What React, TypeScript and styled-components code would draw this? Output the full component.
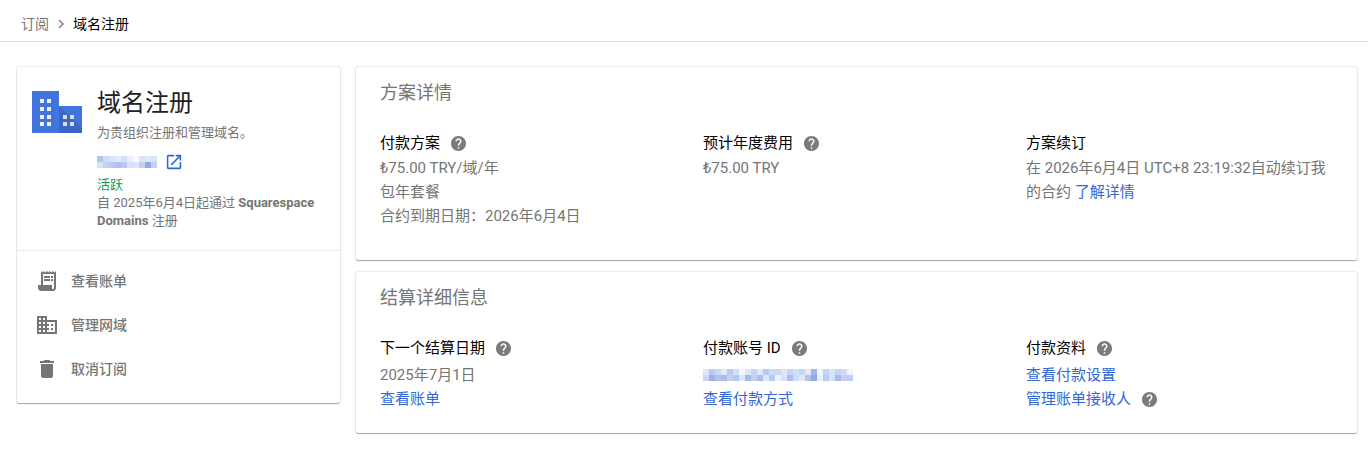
import React from "react";
import styled, { createGlobalStyle } from "styled-components";

const GlobalStyle = createGlobalStyle`
  * { box-sizing: border-box; }
  body {
    margin: 0;
    background: #fff;
    color: #757575;
    font-family: Roboto, "Noto Sans CJK SC", sans-serif;
    font-size: 15px;
    line-height: 24px;
  }
  h1, h2, h3, p, ul, ol { margin: 0; padding: 0; }
  ul, ol { list-style: none; }
  svg { display: block; flex: none; }
`;

const Link = styled.a<{ $muted?: boolean }>`
  color: ${(p) => (p.$muted ? "#757575" : "#3367d6")};
  text-decoration: none;
`;

const Breadcrumbs = styled.nav`
  border-bottom: 1px solid #e0e0e0;
  padding: 12px 21px 5px;
  font-size: 14px;

  ol { display: flex; align-items: center; gap: 8px; }
  li { display: flex; align-items: center; gap: 8px; }
`;

const Current = styled.span`
  color: #000;
`;

const Page = styled.main`
  display: flex;
  align-items: flex-start;
  gap: 16px;
  padding: 25px 11px 16px 17px;
`;

const Card = styled.section`
  background: #fff;
  border-radius: 2px;
  box-shadow: 0 1px 1px rgba(0, 0, 0, 0.3), 0 0 2px rgba(0, 0, 0, 0.26);
`;

const SideCard = styled(Card)`
  flex: 0 0 323px;
`;

const Details = styled.div`
  flex: 1;
  min-width: 0;
  display: flex;
  flex-direction: column;
  gap: 12px;
`;

const Product = styled.div`
  display: flex;
  gap: 15px;
  padding: 20px 15px;
  border-bottom: 1px solid #ebebeb;

  > svg { margin-top: 4px; }
`;

const ProductText = styled.div`
  font-size: 13px;
  line-height: 18px;
`;

const Title = styled.h1`
  color: #212121;
  font-size: 24px;
  font-weight: 400;
  line-height: 32px;
`;

const Description = styled.p`
  margin-top: 5px;
`;

const DomainLink = styled(Link)`
  display: flex;
  align-items: center;
  gap: 9px;
  height: 24px;
  margin: 8px 0 2px;
`;

const Status = styled.p`
  color: #0f9d58;
`;

const Menu = styled.ul`
  padding: 8px 0 12px;
`;

const MenuButton = styled.button`
  display: flex;
  align-items: center;
  gap: 12px;
  width: 100%;
  height: 44px;
  padding: 0 18px;
  border: 0;
  background: none;
  color: #757575;
  font: inherit;
  font-size: 14px;
  font-weight: 500;
  cursor: pointer;
`;

const DetailCard = styled(Card)<{ $compact?: boolean }>`
  padding: 14px 8px ${(p) => (p.$compact ? "22px" : "32px")} 24px;
`;

const CardTitle = styled.h2`
  font-size: 18px;
  font-weight: 400;
  line-height: 24px;
`;

const Columns = styled.div`
  display: grid;
  grid-template-columns: repeat(3, 1fr);
  margin-top: 26px;
`;

const Column = styled.div<{ $spaced?: boolean }>`
  padding-right: 16px;

  h3 + * { margin-top: ${(p) => (p.$spaced ? "3px" : "1px")}; }
`;

const Label = styled.h3`
  display: flex;
  align-items: center;
  gap: 11px;
  color: #000;
  font-size: 15px;
  font-weight: 400;
`;

const Line = styled.p`
  display: flex;
  align-items: center;
  gap: 11px;
  min-height: 24px;
`;

const HelpButton = styled.button`
  padding: 0;
  border: 0;
  background: none;
  color: #7b7b7b;
  cursor: pointer;
`;

function Help({ label }: { label: string }) {
  return (
    <HelpButton type="button" aria-label={label}>
      <svg width="15" height="15" viewBox="2 2 20 20" fill="currentColor">
        <path d="M12 2C6.48 2 2 6.48 2 12s4.48 10 10 10 10-4.48 10-10S17.52 2 12 2zm1 17h-2v-2h2v2zm2.07-7.75l-.9.92C13.45 12.9 13 13.5 13 15h-2v-.5c0-1.1.45-2.1 1.17-2.83l1.24-1.26c.37-.36.59-.86.59-1.41 0-1.1-.9-2-2-2s-2 .9-2 2H8c0-2.21 1.79-4 4-4s4 1.79 4 4c0 .88-.36 1.68-.93 2.25z" />
      </svg>
    </HelpButton>
  );
}

/* Hides a private value behind a grid of tinted cells, one colour per cell. */
function Mosaic({ rows, cell, label }: { rows: string[][]; cell: number; label: string }) {
  const width = rows[0].length * cell;
  const height = rows.length * cell;
  return (
    <svg width={width} height={height} role="img" aria-label={label} shapeRendering="crispEdges">
      {rows.map((row, y) =>
        row.map((fill, x) => (
          <rect key={`${x}-${y}`} x={x * cell} y={y * cell} width={cell} height={cell} fill={fill} />
        ))
      )}
    </svg>
  );
}

const domainCells = [
  ["#b3c6f0", "#d0dbf6", "#dbe4f8", "#e4eafa", "#d5dff7", "#e8eefb", "#f8faff", "#dbe4f8", "#e0e8f9", "#d9e2f8"],
  ["#d9e2f8", "#c3d1f3", "#b9c9f1", "#b0c3ef", "#b9caf1", "#d9e2f8", "#dce5f9", "#c0cff3", "#8faae8", "#c3d1f3"],
];

const accountCells = [
  "#dfe6f8 #b9c8ef #c9d6f5 #e3e9f9 #b9caf0 #d5def6 #f3f6fd #dce8fa #c6d4f4 #e3e6f8 #b9caf2 #cfdcf6 #c9d9f5 #dde5f8 #c6d3f3 #d2dff6 #c3d6f6 #e9e4f5 #9fb5ea #f3f6fd #c6d3f3 #d5e3f8 #c6d3f3 #d9d6f0 #eff4fd".split(" "),
  "#c9d6f5 #9db3e9 #b1c2ee #aabded #c3d0f2 #b5c6ef #dfe6f8 #a5b9eb #c4cff1 #aabeed #dbe8fa #b5cbf3 #f5f0fa #d9e2f8 #aebfed #c9e0fa #e9e4f5 #b1c2ee #8faae6 #e9effb #bccbf1 #d5e3f8 #aabded #c9cdf0 #b9d0f5".split(" "),
];

function Buildings() {
  const windows = [
    ...[7, 15, 23, 30].flatMap((y) => [[8, y], [15, y]]),
    ...[23, 30].flatMap((y) => [[31, y], [38, y]]),
  ];
  return (
    <svg width="50" height="42" viewBox="0 0 50 42" aria-hidden="true">
      <path d="M0 0h27v15h23v27H0z" fill="#4274e0" />
      <path d="M27 15l23 22v5H27z" fill="#3b66c6" />
      {windows.map(([x, y]) => (
        <rect key={`${x}-${y}`} x={x} y={y + 1} width="4" height="4" fill={x > 27 ? "#dadde4" : "#f1f2f4"} />
      ))}
    </svg>
  );
}

const menu = [
  {
    text: "查看账单",
    path: "M19.5 3.5L18 2l-1.500 1.500L15 2l-1.500 1.500L12 2l-1.500 1.500L9 2 7.500 3.500 6 2v14H3v3c0 1.660 1.340 3 3 3h12c1.660 0 3-1.340 3-3V2l-1.500 1.500zM19 19c0 .55-.45 1-1 1s-1-.45-1-1v-3H8V5h11v14zM9 7h6v2H9zM16 7h2v2h-2zM9 10h6v2H9zM16 10h2v2h-2z",
  },
  {
    text: "管理网域",
    path: "M12 7V3H2v18h20V7H12zM6 19H4v-2h2v2zm0-4H4v-2h2v2zm0-4H4V9h2v2zm0-4H4V5h2v2zm4 12H8v-2h2v2zm0-4H8v-2h2v2zm0-4H8V9h2v2zm0-4H8V5h2v2zm10 12h-8v-2h2v-2h-2v-2h2v-2h-2V9h8v10zm-2-8h-2v2h2v-2zm0 4h-2v2h2v-2z",
  },
  {
    text: "取消订阅",
    path: "M6 19c0 1.100.9 2 2 2h8c1.100 0 2-.9 2-2V7H6v12zM19 4h-3.500l-1-1h-5l-1 1H5v2h14V4z",
  },
];

export default function App() {
  return (
    <>
      <GlobalStyle />
      <Breadcrumbs aria-label="路径">
        <ol>
          <li>
            <Link href="#subscriptions" $muted>订阅</Link>
            <svg width="8" height="10" viewBox="0 0 8 10" fill="none" stroke="#757575" strokeWidth="1.300" aria-hidden="true">
              <path d="M2 1l4 4-4 4" />
            </svg>
          </li>
          <li>
            <Current aria-current="page">域名注册</Current>
          </li>
        </ol>
      </Breadcrumbs>
      <Page>
        <SideCard>
          <Product>
            <Buildings />
            <ProductText>
              <Title>域名注册</Title>
              <Description>为贵组织注册和管理域名。</Description>
              <DomainLink href="#domain">
                <Mosaic rows={domainCells} cell={6} label="域名" />
                <svg width="16" height="16" viewBox="2 2 20 20" fill="currentColor" aria-hidden="true">
                  <path d="M19 19H5V5h7V3H5c-1.110 0-2 .9-2 2v14c0 1.100.89 2 2 2h14c1.100 0 2-.9 2-2v-7h-2v7zM14 3v2h3.590l-9.830 9.830 1.410 1.410L19 6.410V10h2V3h-7z" />
                </svg>
              </DomainLink>
              <Status>活跃</Status>
              <p>
                自 2025年6月4日起通过 <b>Squarespace Domains</b> 注册
              </p>
            </ProductText>
          </Product>
          <Menu>
            {menu.map((item) => (
              <li key={item.text}>
                <MenuButton type="button">
                  <svg width="24" height="24" viewBox="0 0 24 24" fill="currentColor" aria-hidden="true">
                    <path d={item.path} />
                  </svg>
                  {item.text}
                </MenuButton>
              </li>
            ))}
          </Menu>
        </SideCard>
        <Details>
          <DetailCard>
            <CardTitle>方案详情</CardTitle>
            <Columns>
              <Column>
                <Label>付款方案 <Help label="付款方案帮助" /></Label>
                <Line>₺75.00 TRY/域/年</Line>
                <Line>包年套餐</Line>
                <Line>合约到期日期：2026年6月4日</Line>
              </Column>
              <Column>
                <Label>预计年度费用 <Help label="预计年度费用帮助" /></Label>
                <Line>₺75.00 TRY</Line>
              </Column>
              <Column>
                <Label>方案续订</Label>
                <p>
                  在 2026年6月4日 UTC+8 23:19:32自动续订我的合约 <Link href="#renewal">了解详情</Link>
                </p>
              </Column>
            </Columns>
          </DetailCard>
          <DetailCard $compact>
            <CardTitle>结算详细信息</CardTitle>
            <Columns>
              <Column $spaced>
                <Label>下一个结算日期 <Help label="下一个结算日期帮助" /></Label>
                <Line>2025年7月1日</Line>
                <Line><Link href="#bills">查看账单</Link></Line>
              </Column>
              <Column $spaced>
                <Label>付款账号 ID <Help label="付款账号 ID 帮助" /></Label>
                <Line>
                  <Link href="#account">
                    <Mosaic rows={accountCells} cell={6} label="付款账号 ID" />
                  </Link>
                </Line>
                <Line><Link href="#methods">查看付款方式</Link></Line>
              </Column>
              <Column $spaced>
                <Label>付款资料 <Help label="付款资料帮助" /></Label>
                <Line><Link href="#settings">查看付款设置</Link></Line>
                <Line>
                  <Link href="#contacts">管理账单接收人</Link>
                  <Help label="管理账单接收人帮助" />
                </Line>
              </Column>
            </Columns>
          </DetailCard>
        </Details>
      </Page>
    </>
  );
}
